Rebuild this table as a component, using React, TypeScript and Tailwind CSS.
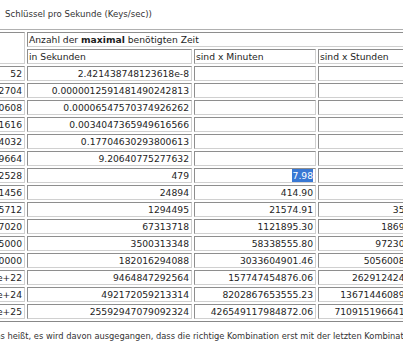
import React from "react";

const sec = [
  "2.421438748123618e-8",
  "0.0000012591481490242813",
  "0.00006547570374926262",
  "0.0034047365949616566",
  "0.17704630293800613",
  "9.20640775277632",
  "479",
  "24894",
  "1294495",
  "67313718",
  "3500313348",
  "182016294088",
  "9464847292564",
  "492172059213314",
  "25592947079092324",
];
const mins = [
  "", "", "", "", "", "",
  "7.98",
  "414.90",
  "21574.91",
  "1121895.30",
  "58338555.80",
  "3033604901.46",
  "157747454876.06",
  "8202867653555.23",
  "426549117984872.06",
];
const hrs = [
  "", "", "", "", "", "", "",
  "6.92",
  "359.58",
  "18698.26",
  "972309.26",
  "50560081.69",
  "2629124247.93",
  "136714460892.59",
  "7109151966414.53",
];

const cell =
  "h-[15px] border border-t-[#8e8e8e] border-l-[#8e8e8e] border-b-[#d0d0d0] border-r-[#d0d0d0] bg-white pl-[1px] pr-[2px] leading-[13px] whitespace-nowrap overflow-hidden";

export default function App() {
  return (
    <div
      className="w-[403px] h-[350px] overflow-hidden bg-white text-[#1e1e1e]"
      style={{ fontFamily: '"DejaVu Sans", Verdana, sans-serif' }}
    >
      <div className="pt-[9px] pl-[5px] text-[8.6px] leading-[10px] text-[#333] whitespace-nowrap">
        Schlüssel pro Sekunde (Keys/sec))
      </div>
      <div className="mt-[10px] ml-[-118px] w-max border border-t-[#b0b0b0] border-l-[#b0b0b0] border-b-[#888888] border-r-[#888888] p-[2px] grid grid-cols-[140px_165px_122px_110px] gap-[2px] text-[9.2px]">
        <div className={`${cell} row-span-2 h-auto`}></div>
        <div className={`${cell} col-span-3`}>
          Anzahl der <b>maximal</b> benötigten Zeit
        </div>
        <div className={cell}>in Sekunden</div>
        <div className={cell}>sind x Minuten</div>
        <div className={cell}>sind x Stunden</div>
        {sec.map((s, i) => (
          <React.Fragment key={i}>
            <div className={`${cell} text-right`}>{String(52 ** (i + 1))}</div>
            <div className={`${cell} text-right`}>{s}</div>
            <div className={`${cell} text-right`}>
              {i === 6 ? (
                <span className="inline-block bg-[#3878d4] text-white pl-[1px] leading-[13px]">
                  {mins[i]}
                </span>
              ) : (
                mins[i]
              )}
            </div>
            <div className={`${cell} text-right`}>{hrs[i]}</div>
          </React.Fragment>
        ))}
      </div>
      <div className="mt-[9px] ml-[-11px] text-[8.3px] leading-[10px] text-[#333] whitespace-nowrap">
        Das heißt, es wird davon ausgegangen, dass die richtige Kombination erst mit der letzten Kombination gefunden wird.
      </div>
    </div>
  );
}
